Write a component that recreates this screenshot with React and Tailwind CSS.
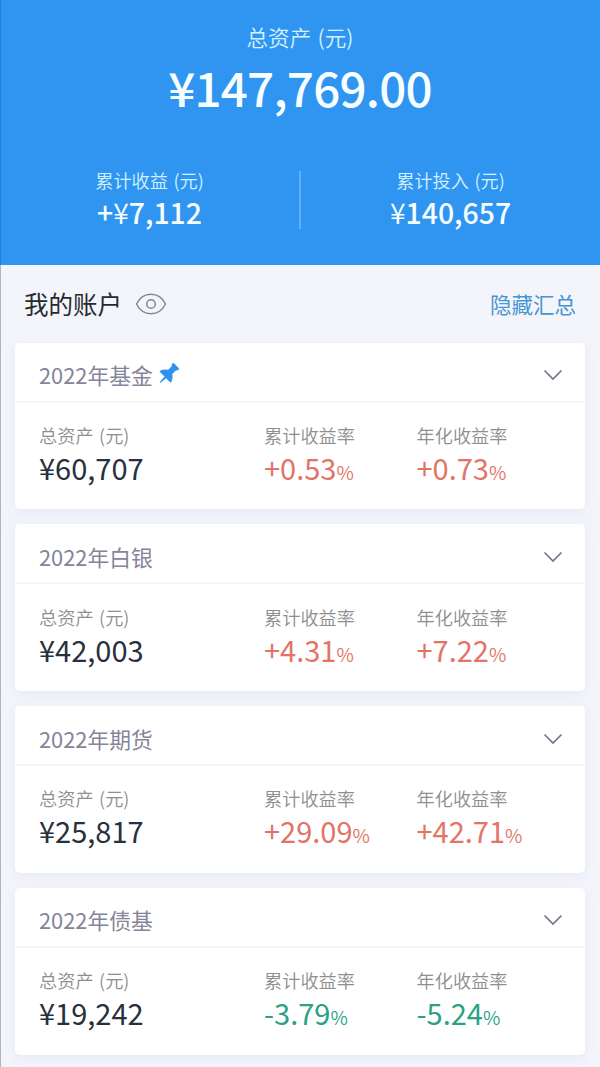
import clsx from 'clsx'

const ACCOUNTS = [
  { name: '2022年基金', pinned: true, total: '60,707', profit: '+0.53', yearly: '+0.73' },
  { name: '2022年白银', total: '42,003', profit: '+4.31', yearly: '+7.22' },
  { name: '2022年期货', total: '25,817', profit: '+29.09', yearly: '+42.71' },
  { name: '2022年债基', total: '19,242', profit: '-3.79', yearly: '-5.24' },
]

function EyeIcon() {
  return (
    <svg className="w-8 h-6 ml-[13px]" viewBox="0 0 32 24" fill="none" stroke="#86869a" strokeWidth="1.5">
      <path strokeLinejoin="round" d="M1.5 12C4.6 5.8 9.6 2.3 16 2.3S27.4 5.8 30.5 12C27.4 18.2 22.4 21.7 16 21.7S4.6 18.2 1.5 12z" />
      <circle cx="16" cy="12" r="4.3" />
    </svg>
  )
}

function PinIcon() {
  return (
    <svg className="w-[22px] h-[22px] ml-[5px] -mt-[5px]" viewBox="0 0 22 22" fill="#2f92ee">
      <path d="M14.6 1.2Q15.4.8 16.2 1.5L20.8 6.2Q21.4 7.2 20.4 8Q19.2 8.6 18.1 8.3L14.2 12.3C15 15 14.4 17.8 13.2 20.2Q12.6 20.8 12 20.2L8 16.2 2.6 20.8 1.8 20.1 6.5 14.6 2 10.1Q1.2 9.2 2.3 8.7C4.6 7.4 7.4 7.3 9.9 7.9L13.7 4.2Q13.4 2 14.6 1.2z" />
    </svg>
  )
}

function ChevronIcon() {
  return (
    <svg className="w-5 h-3" viewBox="0 0 20 12" fill="none" stroke="#76768a" strokeWidth="1.7">
      <path d="M1.5 1.5 10 10 18.5 1.5" />
    </svg>
  )
}

function SummaryItem({ label, prefix, value }) {
  return (
    <div className="flex-1 text-center">
      <p className="text-[18.2px] leading-6 font-[350] [word-spacing:1.5px] text-[#d3f2ff]">{label}</p>
      <p className="mt-[2px] text-[28.4px] leading-9 font-medium">
        {prefix}
        <span className="font-[350]">¥</span>
        {value}
      </p>
    </div>
  )
}

function Rate({ label, value }) {
  return (
    <div>
      <p className="text-[18.2px] leading-6 font-[350] text-[#8e8e8e]">{label}</p>
      <p className={clsx('mt-[2px] text-[29px] leading-9', value.startsWith('-') ? 'text-[#2ba283]' : 'text-[#e27467]')}>
        {value}
        <span className="text-[19px] font-[350]">%</span>
      </p>
    </div>
  )
}

function AccountCard({ account }) {
  return (
    <div className="h-[166.8px] rounded-[5px] bg-white shadow-[0_3px_12px_rgba(80,100,200,0.09)]">
      <div className="flex items-center justify-between h-[60px] pl-6 pr-[22px] pt-[7px] border-b-2 border-[#f6f6f8]">
        <div className="flex items-center text-[21.8px] leading-8 text-[#85859a]">
          {account.name}
          {account.pinned && <PinIcon />}
        </div>
        <ChevronIcon />
      </div>
      <div className="grid grid-cols-[225px_152.5px_1fr] pl-6 pt-[20.4px]">
        <div>
          <p className="text-[18.2px] leading-6 font-[350] [word-spacing:1.5px] text-[#8e8e8e]">总资产 (元)</p>
          <p className="mt-[2px] text-[29px] leading-9 text-[#27313d]">¥{account.total}</p>
        </div>
        <Rate label="累计收益率" value={account.profit} />
        <Rate label="年化收益率" value={account.yearly} />
      </div>
    </div>
  )
}

export default function App() {
  return (
    <div className="h-[1067px] overflow-hidden bg-[#f4f5fb] font-['Noto_Sans_CJK_SC',sans-serif] whitespace-nowrap">
      <header className="h-[265px] pt-[21px] bg-[#3095f1] text-[#f7feff] shadow-[inset_1px_0_0_#2b7fce]">
        <div className="text-center">
          <p className="text-[21.6px] leading-8 font-[350] [word-spacing:1.5px] text-[#d3f2ff]">总资产 (元)</p>
          <p className="mt-[4px] text-[47.5px] leading-[60px] font-medium tracking-[-0.75px]">¥147,769.00</p>
        </div>
        <div className="flex mt-[51px]">
          <SummaryItem label="累计收益 (元)" prefix="+" value="7,112" />
          <div className="w-[2px] h-[58px] mt-[3px] bg-[#5eb0fa]" />
          <SummaryItem label="累计投入 (元)" value="140,657" />
        </div>
      </header>

      <div className="h-[802px] shadow-[inset_1px_0_0_#b4b5bc]">
        <div className="flex items-center justify-between h-[77.5px] px-6">
          <div className="flex items-center text-[24.5px] text-[#292a2e]">
            <span className="mt-[2px]">我的账户</span>
            <EyeIcon />
          </div>
          <span className="text-[21.5px] text-[#4596d3]">隐藏汇总</span>
        </div>

        <main className="flex flex-col gap-[15px] px-[15px]">
          {ACCOUNTS.map((account) => (
            <AccountCard key={account.name} account={account} />
          ))}
        </main>
      </div>
    </div>
  )
}
